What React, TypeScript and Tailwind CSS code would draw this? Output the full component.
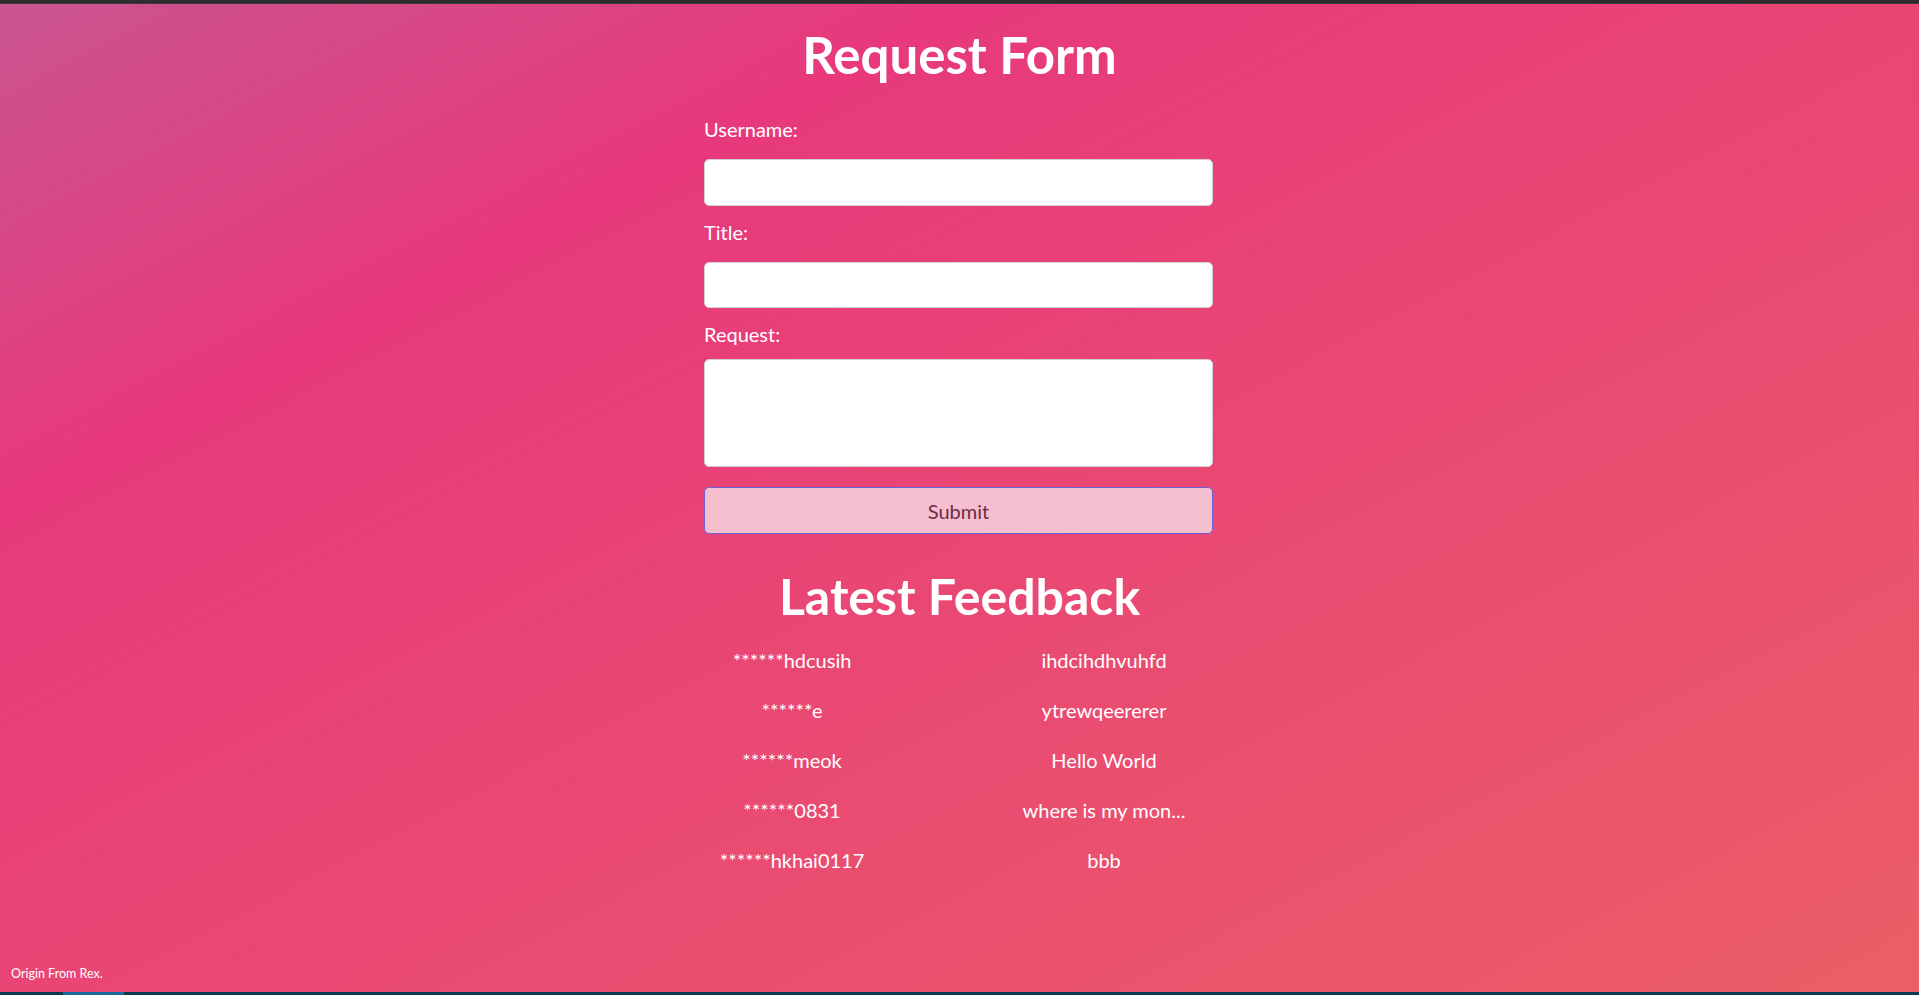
import React, { useState } from 'react';

type Feedback = {
  user: string;
  title: string;
};

const feedbacks: Feedback[] = [
  { user: '******hdcusih', title: 'ihdcihdhvuhfd' },
  { user: '******e', title: 'ytrewqeererer' },
  { user: '******meok', title: 'Hello World' },
  { user: '******0831', title: 'where is my mon...' },
  { user: '******hkhai0117', title: 'bbb' },
];

const fieldClass =
  'w-full bg-white border border-[#cfcfd4] rounded-[5px] px-3 text-[18px] text-[#222] outline-none';

export default function App() {
  const [username, setUsername] = useState('');
  const [title, setTitle] = useState('');
  const [request, setRequest] = useState('');

  return (
    <div className="min-h-screen h-[995px] flex flex-col bg-[linear-gradient(to_bottom_right,#c9558f_0%,#e7397c_25%,#ec5e66_100%)] font-['Lato','Open_Sans',sans-serif] text-white overflow-hidden">
      <div className="h-[4px] bg-[#2d2d2d] border-b border-[#3a3a3a]" />

      <div className="flex flex-col items-center">
        <h1 className="mt-[22px] text-[51px] leading-[58px] font-bold">Request Form</h1>

        <form
          className="w-[509px] flex flex-col mt-[33px] -translate-x-[1px]"
          onSubmit={(e) => e.preventDefault()}>

          <label className="text-[20px] leading-[24px]">Username:</label>
          <input
            value={username}
            onChange={(e) => setUsername(e.target.value)}
            className={`${fieldClass} h-[47px] mt-[18px]`} />

          <label className="text-[20px] leading-[24px] mt-[14px]">Title:</label>
          <input
            value={title}
            onChange={(e) => setTitle(e.target.value)}
            className={`${fieldClass} h-[46px] mt-[18px]`} />

          <label className="text-[20px] leading-[24px] mt-[14px]">Request:</label>
          <textarea
            value={request}
            onChange={(e) => setRequest(e.target.value)}
            className={`${fieldClass} h-[108px] mt-[13px] resize-none py-2`} />

          <button
            type="submit"
            className="mt-[20px] h-[47px] w-full rounded-[5px] border border-[#6a63d6] bg-[#f6bfcf] text-[20px] text-[#6b2c44]">
            Submit
          </button>
        </form>

        <h2 className="mt-[32px] text-[50px] leading-[60px] font-bold">Latest Feedback</h2>

        <div className="mt-[9px] grid grid-cols-[289px_335px] text-[20px] leading-[50px] text-center">
          {feedbacks.map((f) =>
          <React.Fragment key={f.user}>
              <div>{f.user}</div>
              <div>{f.title}</div>
            </React.Fragment>
          )}
        </div>
      </div>

      <div className="mt-auto pl-[11px] pb-[10px] text-[12.5px] leading-[16px]">Origin From Rex.</div>

      <div className="h-[3px] bg-[#0b3a4d] flex">
        <div className="ml-[63px] w-[61px] bg-[#1a6c9e]" />
      </div>
    </div>);

}
